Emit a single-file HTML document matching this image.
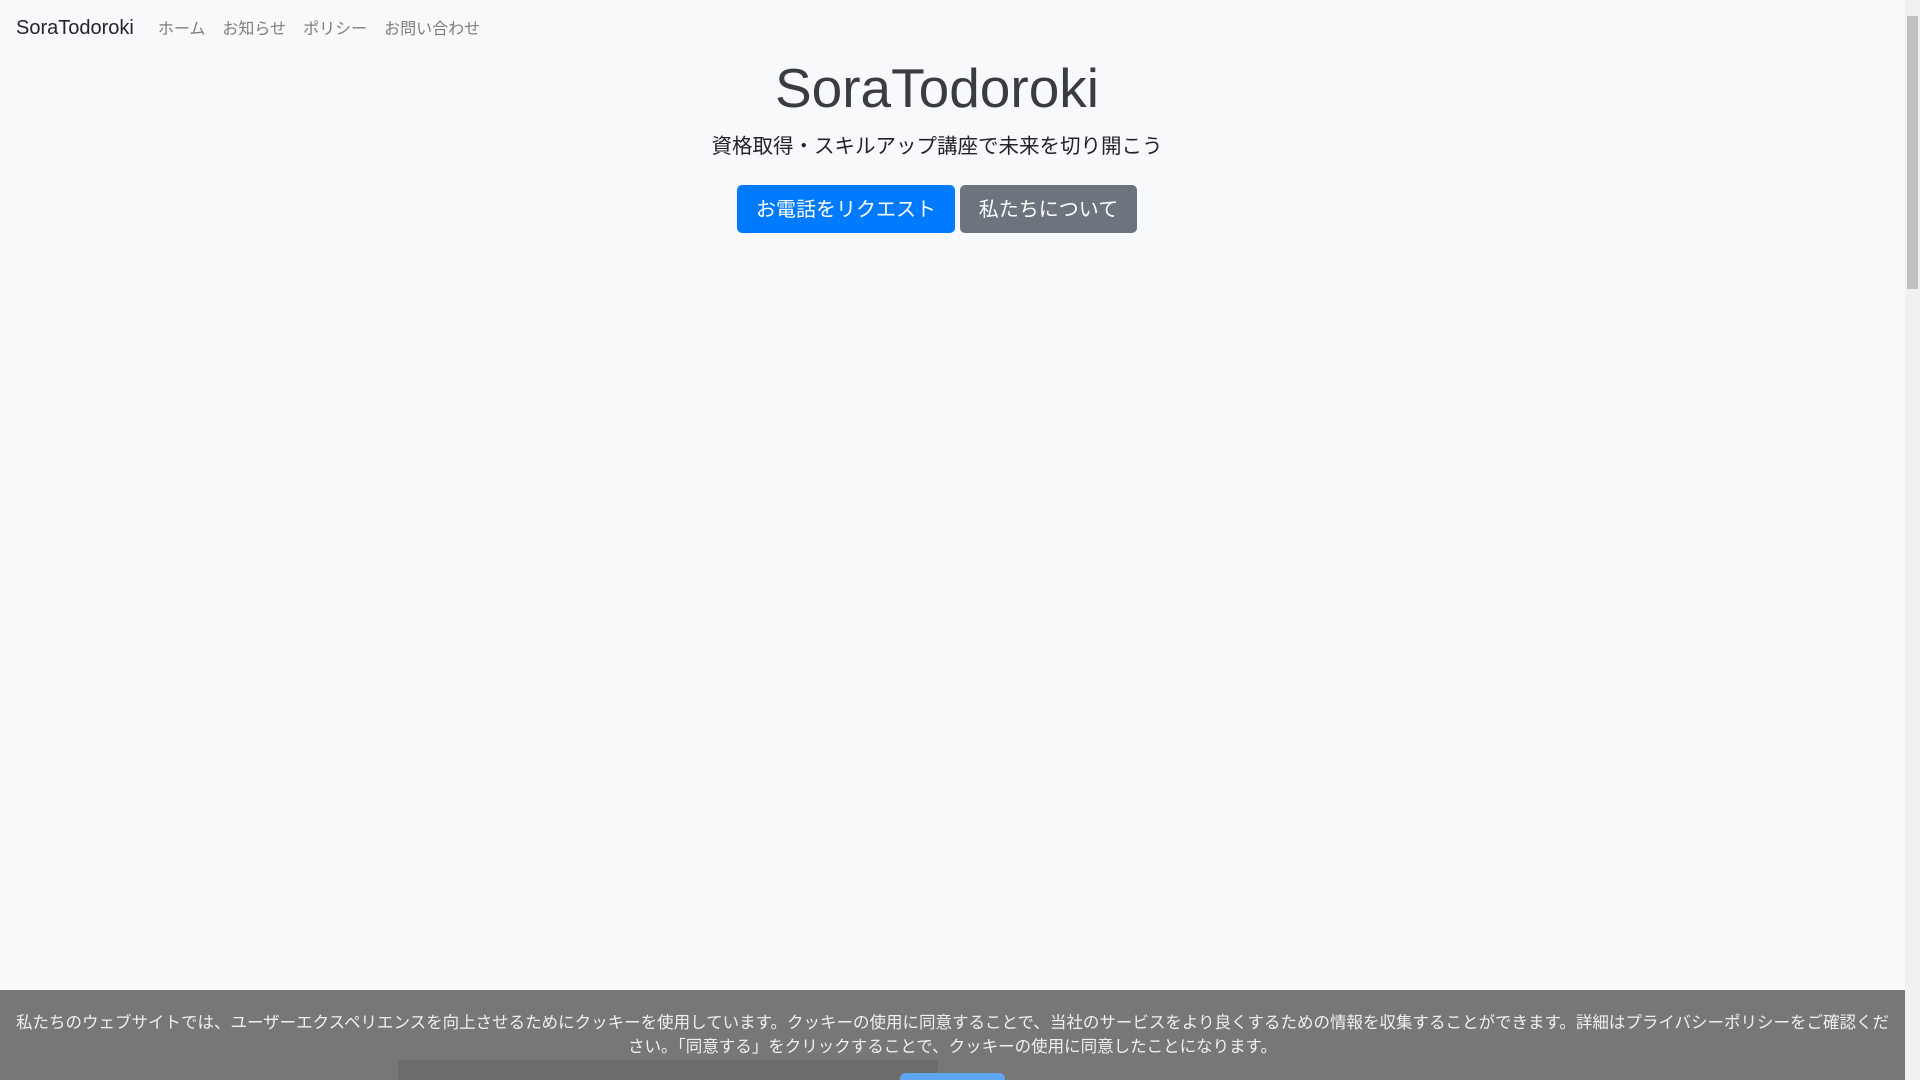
<!DOCTYPE html>
<html><head><meta charset="utf-8"><style>
*{margin:0;padding:0;box-sizing:border-box}
html,body{width:1920px;height:1080px;overflow:hidden}
body{background:#f8f9fa;font-family:"Liberation Sans","Noto Sans CJK JP",sans-serif;color:#212529;position:relative}
.nav{position:absolute;left:16px;top:13px;height:28px;display:flex;align-items:center}
.brand{font-size:20px;color:#212529;margin-right:24px;position:relative;top:1px}
.nav a{font-size:16px;color:rgba(0,0,0,.5);margin-right:17px;text-decoration:none}
.hero{position:absolute;left:0;width:1874px;top:0;text-align:center}
h1{position:absolute;width:100%;top:53px;font-size:55px;font-weight:300;line-height:70px;color:#3a3d40}
.lead{position:absolute;width:100%;top:133px;font-size:20.5px;line-height:28px}
.btns{position:absolute;width:100%;top:185px;display:flex;justify-content:center;gap:5px}
.btn{height:48px;line-height:50px;padding:0 16px;font-size:20px;color:#fff;border-radius:5px}
.b1{background:#007bff;width:218px;text-align:center}
.b2{background:#6c757d;width:177px;text-align:center}
.sb{position:absolute;right:0;top:0;width:15px;height:1080px;background:#f1f1f1}
.thumb{position:absolute;right:2px;top:16px;width:11px;height:273px;background:#c1c1c1}
.cookie{position:absolute;left:0;top:990px;width:1905px;height:90px;background:#767776}
.ct{position:absolute;left:12px;right:12px;top:21px;text-align:center;color:#f0f0f0;font-size:16.5px;line-height:24px}
.box{position:absolute;left:398px;top:70px;width:540px;height:30px;background:#6e6c6a}
.cb{position:absolute;left:900px;top:83px;width:105px;height:20px;background:#5ea7f7;border-radius:6px}
</style></head><body>
<div class="nav"><span class="brand">SoraTodoroki</span><a>ホーム</a><a>お知らせ</a><a>ポリシー</a><a>お問い合わせ</a></div>
<div class="hero">
<h1>SoraTodoroki</h1>
<p class="lead">資格取得・スキルアップ講座で未来を切り開こう</p>
<div class="btns"><span class="btn b1">お電話をリクエスト</span><span class="btn b2">私たちについて</span></div>
</div>
<div class="cookie">
<div class="ct">私たちのウェブサイトでは、ユーザーエクスペリエンスを向上させるためにクッキーを使用しています。クッキーの使用に同意することで、当社のサービスをより良くするための情報を収集することができます。詳細はプライバシーポリシーをご確認ください。「同意する」をクリックすることで、クッキーの使用に同意したことになります。</div>
<div class="box"></div><div class="cb"></div>
</div>
<div class="sb"><div class="thumb"></div></div>
</body></html>
